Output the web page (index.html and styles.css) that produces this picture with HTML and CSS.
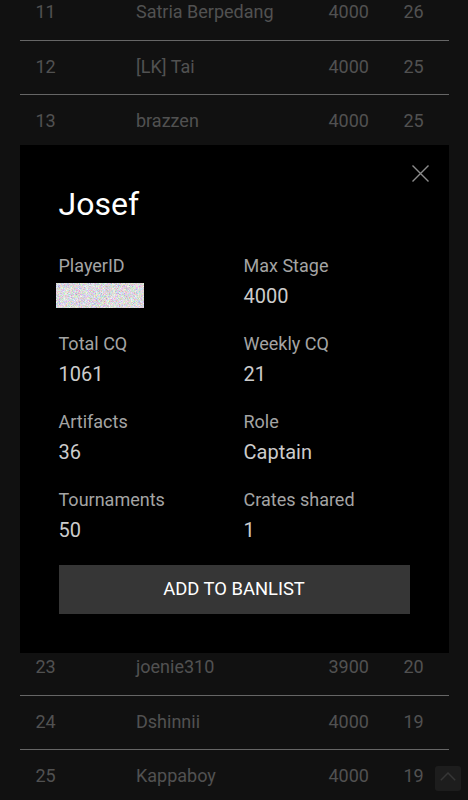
FILE: index.html
```html
<!DOCTYPE html>
<html lang="en">
<head>
    <meta charset="UTF-8">
    <meta name="viewport" content="width=device-width, initial-scale=1.0">
    <title>Clan Members</title>
    <link rel="stylesheet" href="styles.css">
</head>
<body>

<div class="page">
    <div class="ranking">
        <div class="row"><span>11</span><span>Satria Berpedang</span><span>4000</span><span>26</span></div>
        <div class="row"><span>12</span><span>[LK] Tai</span><span>4000</span><span>25</span></div>
        <div class="row"><span>13</span><span>brazzen</span><span>4000</span><span>25</span></div>
        <div class="row"><span>14</span><span>Josef</span><span>4000</span><span>21</span></div>
        <div class="row"><span>15</span><span>Rakun</span><span>4000</span><span>21</span></div>
        <div class="row"><span>16</span><span>Nightfall</span><span>4000</span><span>21</span></div>
        <div class="row"><span>17</span><span>Ordo</span><span>4000</span><span>21</span></div>
        <div class="row"><span>18</span><span>Valkyr</span><span>3900</span><span>21</span></div>
        <div class="row"><span>19</span><span>Heimdall</span><span>4000</span><span>20</span></div>
        <div class="row"><span>20</span><span>Kaito</span><span>4000</span><span>20</span></div>
        <div class="row"><span>21</span><span>Marlow</span><span>4000</span><span>20</span></div>
        <div class="row"><span>22</span><span>Sylph</span><span>3900</span><span>20</span></div>
        <div class="row"><span>23</span><span>joenie310</span><span>3900</span><span>20</span></div>
        <div class="row"><span>24</span><span>Dshinnii</span><span>4000</span><span>19</span></div>
        <div class="row"><span>25</span><span>Kappaboy</span><span>4000</span><span>19</span></div>
    </div>

    <div class="modal">
        <button class="close" aria-label="Close">
            <svg width="17" height="17" viewBox="0 0 17 17">
                <path d="M0.5 0.5 L16.5 16.5 M16.5 0.5 L0.5 16.5" stroke="#8c8c8c" stroke-width="1.4" fill="none"/>
            </svg>
        </button>

        <h1 class="player-name">Josef</h1>

        <div class="stats">
            <div class="stat">
                <div class="stat-label">PlayerID</div>
                <div class="stat-value">
                    <!-- id is blurred out with noise -->
                    <svg class="redacted" width="88" height="25" viewBox="0 0 88 25">
                        <filter id="noise" x="0" y="0" width="100%" height="100%">
                            <feTurbulence type="fractalNoise" baseFrequency="1.6" numOctaves="1" seed="7"/>
                            <feColorMatrix type="matrix" values="1.3 0 0 0 0.06  0 1.3 0 0 0.04  0 0 1.3 0 0.08  0 0 0 0 1"/>
                        </filter>
                        <rect width="88" height="25" filter="url(#noise)"/>
                    </svg>
                </div>
            </div>
            <div class="stat">
                <div class="stat-label">Max Stage</div>
                <div class="stat-value">4000</div>
            </div>
            <div class="stat">
                <div class="stat-label">Total CQ</div>
                <div class="stat-value">1061</div>
            </div>
            <div class="stat">
                <div class="stat-label">Weekly CQ</div>
                <div class="stat-value">21</div>
            </div>
            <div class="stat">
                <div class="stat-label">Artifacts</div>
                <div class="stat-value">36</div>
            </div>
            <div class="stat">
                <div class="stat-label">Role</div>
                <div class="stat-value">Captain</div>
            </div>
            <div class="stat">
                <div class="stat-label">Tournaments</div>
                <div class="stat-value">50</div>
            </div>
            <div class="stat">
                <div class="stat-label">Crates shared</div>
                <div class="stat-value">1</div>
            </div>
        </div>

        <button class="ban-btn">ADD TO BANLIST</button>
    </div>

    <button class="to-top" aria-label="Back to top">
        <svg width="16" height="9" viewBox="0 0 16 9">
            <path d="M0.8 8.2 L8 1 L15.2 8.2" stroke="#363636" stroke-width="1.5" fill="none"/>
        </svg>
    </button>
</div>

</body>
</html>
```

FILE: styles.css
```css
body {
    margin: 0;
    padding: 0;
    background-color: #111111;
    font-family: Roboto, "Liberation Sans", sans-serif;
}

.page {
    height: 100vh;
    overflow: hidden;
}

.ranking {
    margin: -14.1px 19.5px 0 19.5px;
}

.row {
    display: grid;
    grid-template-columns: 100.5px 192.5px 75px 1fr;
    box-sizing: border-box;
    height: 54.6px;
    padding: 0 0 2px 16px;
    border-bottom: 1px solid #666666;
    font-size: 18px;
    line-height: 51.6px;
    color: #515151;
    white-space: nowrap;
}

.modal {
    position: fixed;
    top: 145px;
    left: 19.5px;
    width: 429px;
    box-sizing: border-box;
    padding: 39px;
    background-color: #000000;
}

.close {
    position: absolute;
    top: 20px;
    right: 20px;
    width: 17px;
    height: 17px;
    padding: 0;
    border: none;
    background: none;
    display: flex;
}

.player-name {
    margin: 0 0 29.5px 0;
    font-size: 32px;
    font-weight: 400;
    line-height: 40px;
    color: #ffffff;
}

.stats {
    display: grid;
    grid-template-columns: 185px 1fr;
    row-gap: 23px;
}

.stat-label {
    font-size: 18px;
    line-height: 24px;
    color: #a4a4a4;
}

.stat-value {
    margin-top: 5px;
    height: 26px;
    font-size: 20px;
    line-height: 26px;
    color: #cccccc;
}

.redacted {
    display: block;
    margin: 2px 0 0 -2.5px;
}

.ban-btn {
    display: block;
    width: 100%;
    height: 49px;
    margin-top: 22px;
    padding: 0;
    border: none;
    background-color: #363636;
    color: #ffffff;
    font-family: Roboto, "Liberation Sans", sans-serif;
    font-size: 18.4px;
    line-height: 24px;
}

.to-top {
    position: fixed;
    right: 6.7px;
    bottom: 9.3px;
    width: 26px;
    height: 25px;
    padding: 0;
    border: none;
    border-radius: 3px;
    background-color: #1d1d1d;
    display: flex;
    align-items: center;
    justify-content: center;
}

.to-top svg {
    margin-top: -4px;
}
```
